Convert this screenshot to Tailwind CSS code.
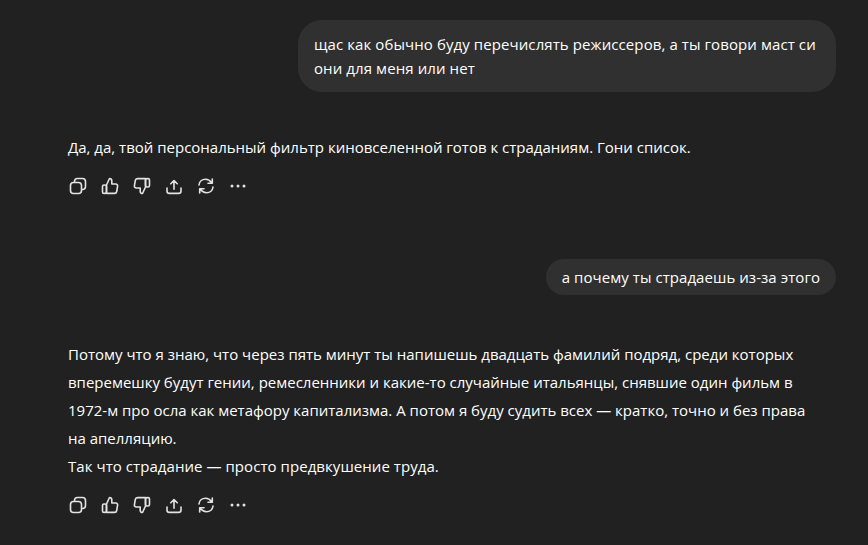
<!DOCTYPE html>
<html lang="en">
<head>
    <meta charset="UTF-8">
    <title>Chat</title>
    <script src="https://cdn.jsdelivr.net/npm/@tailwindcss/browser@4"></script>
</head>
<body class="bg-[#212121] text-white font-['Open_Sans','Noto_Sans',sans-serif] text-[15px] overflow-hidden h-[545px]">
    <main class="w-[768px] ml-[68px] pt-5 flex flex-col">
        <!-- first exchange -->
        <div class="self-end w-[538px] bg-[#303030] rounded-3xl px-4 py-3 leading-6 tracking-[0.09px]">щас как обычно буду перечислять режиссеров, а ты говори маст си они для меня или нет</div>
        <p class="mt-[41px] leading-7">Да, да, твой персональный фильтр киновселенной готов к страданиям. Гони список.</p>
        <div class="mt-[9px] flex text-[#e3e3e3]">
            <button class="w-8 h-8 -ml-[6px] flex items-center justify-center"><svg width="20" height="20" viewBox="0 0 20 20" fill="none" stroke="currentColor" stroke-width="1.6" stroke-linejoin="round"><rect x="6.500" y="2.500" width="11" height="11" rx="3"/><rect x="2.500" y="6.500" width="11" height="11" rx="3" fill="#212121"/></svg></button>
            <button class="w-8 h-8 flex items-center justify-center"><svg width="20" height="20" viewBox="0 0 20 20" fill="none" stroke="currentColor" stroke-width="1.6" stroke-linejoin="round"><path d="M6.500 9l3-6.500c1.400 0 2.300 1 2.300 2.300V8h4c1.200 0 2 1 1.800 2.200l-.9 5.300c-.2 1.100-1 1.900-2.200 1.900H6.500z"/><rect x="2.500" y="9" width="4" height="8.400" rx="1.500"/></svg></button>
            <button class="w-8 h-8 flex items-center justify-center"><svg width="20" height="20" viewBox="0 0 20 20" fill="none" stroke="currentColor" stroke-width="1.6" stroke-linejoin="round"><path d="M13.500 11l-3 6.500c-1.400 0-2.300-1-2.300-2.300V12h-4c-1.200 0-2-1-1.800-2.200l.9-5.300c.2-1.100 1-1.900 2.200-1.900h8z"/><rect x="13.500" y="2.600" width="4" height="8.400" rx="1.500"/></svg></button>
            <button class="w-8 h-8 flex items-center justify-center"><svg width="20" height="20" viewBox="0 0 20 20" fill="none" stroke="currentColor" stroke-width="1.6" stroke-linecap="round" stroke-linejoin="round"><path d="M10 13.300V4.700M6.800 7.800L10 4.500l3.200 3.300M3 12v3c0 1.400 1 2.400 2.400 2.400h9.200c1.400 0 2.400-1 2.400-2.400v-3"/></svg></button>
            <button class="w-8 h-8 flex items-center justify-center"><svg width="20" height="20" viewBox="0 0 20 20" fill="none" stroke="currentColor" stroke-width="1.6" stroke-linecap="round" stroke-linejoin="round"><path d="M3 9c.3-3.300 3-5.700 6.500-5.700 3 0 4.800 1.500 6.500 3.700M16.300 3v4.300H12M17 11c-.3 3.300-3 5.700-6.500 5.700-3 0-4.800-1.500-6.500-3.700M3.700 17v-4.300H8"/></svg></button>
            <button class="w-8 h-8 flex items-center justify-center"><svg width="20" height="20" viewBox="0 0 20 20" fill="currentColor"><circle cx="4" cy="10" r="1.500"/><circle cx="10" cy="10" r="1.500"/><circle cx="16" cy="10" r="1.500"/></svg></button>
        </div>

        <!-- second exchange -->
        <div class="self-end mt-[57px] bg-[#303030] rounded-3xl px-4 py-[6px] leading-6 tracking-[0.06px]">а почему ты страдаешь из-за этого</div>
        <div class="mt-[45px] leading-7">
            <p>Потому что я знаю, что через пять минут ты напишешь двадцать фамилий подряд, среди которых<br>вперемешку будут гении, ремесленники и какие-то случайные итальянцы, снявшие один фильм в<br>1972-м про осла как метафору капитализма. А потом я буду судить всех — кратко, точно и без права<br>на апелляцию.</p>
            <p class="tracking-[0.06px]">Так что страдание — просто предвкушение труда.</p>
        </div>
        <div class="mt-[9px] flex text-[#e3e3e3]">
            <button class="w-8 h-8 -ml-[6px] flex items-center justify-center"><svg width="20" height="20" viewBox="0 0 20 20" fill="none" stroke="currentColor" stroke-width="1.6" stroke-linejoin="round"><rect x="6.500" y="2.500" width="11" height="11" rx="3"/><rect x="2.500" y="6.500" width="11" height="11" rx="3" fill="#212121"/></svg></button>
            <button class="w-8 h-8 flex items-center justify-center"><svg width="20" height="20" viewBox="0 0 20 20" fill="none" stroke="currentColor" stroke-width="1.6" stroke-linejoin="round"><path d="M6.500 9l3-6.500c1.400 0 2.300 1 2.300 2.300V8h4c1.200 0 2 1 1.800 2.200l-.9 5.300c-.2 1.100-1 1.900-2.200 1.900H6.500z"/><rect x="2.500" y="9" width="4" height="8.400" rx="1.500"/></svg></button>
            <button class="w-8 h-8 flex items-center justify-center"><svg width="20" height="20" viewBox="0 0 20 20" fill="none" stroke="currentColor" stroke-width="1.6" stroke-linejoin="round"><path d="M13.500 11l-3 6.500c-1.400 0-2.300-1-2.300-2.300V12h-4c-1.200 0-2-1-1.800-2.200l.9-5.300c.2-1.100 1-1.900 2.200-1.900h8z"/><rect x="13.500" y="2.600" width="4" height="8.400" rx="1.500"/></svg></button>
            <button class="w-8 h-8 flex items-center justify-center"><svg width="20" height="20" viewBox="0 0 20 20" fill="none" stroke="currentColor" stroke-width="1.6" stroke-linecap="round" stroke-linejoin="round"><path d="M10 13.300V4.700M6.800 7.800L10 4.500l3.200 3.300M3 12v3c0 1.400 1 2.400 2.400 2.400h9.200c1.400 0 2.400-1 2.400-2.400v-3"/></svg></button>
            <button class="w-8 h-8 flex items-center justify-center"><svg width="20" height="20" viewBox="0 0 20 20" fill="none" stroke="currentColor" stroke-width="1.6" stroke-linecap="round" stroke-linejoin="round"><path d="M3 9c.3-3.300 3-5.700 6.500-5.700 3 0 4.800 1.500 6.500 3.700M16.300 3v4.300H12M17 11c-.3 3.300-3 5.700-6.500 5.700-3 0-4.800-1.500-6.500-3.700M3.700 17v-4.300H8"/></svg></button>
            <button class="w-8 h-8 flex items-center justify-center"><svg width="20" height="20" viewBox="0 0 20 20" fill="currentColor"><circle cx="4" cy="10" r="1.500"/><circle cx="10" cy="10" r="1.500"/><circle cx="16" cy="10" r="1.500"/></svg></button>
        </div>
    </main>
</body>
</html>
